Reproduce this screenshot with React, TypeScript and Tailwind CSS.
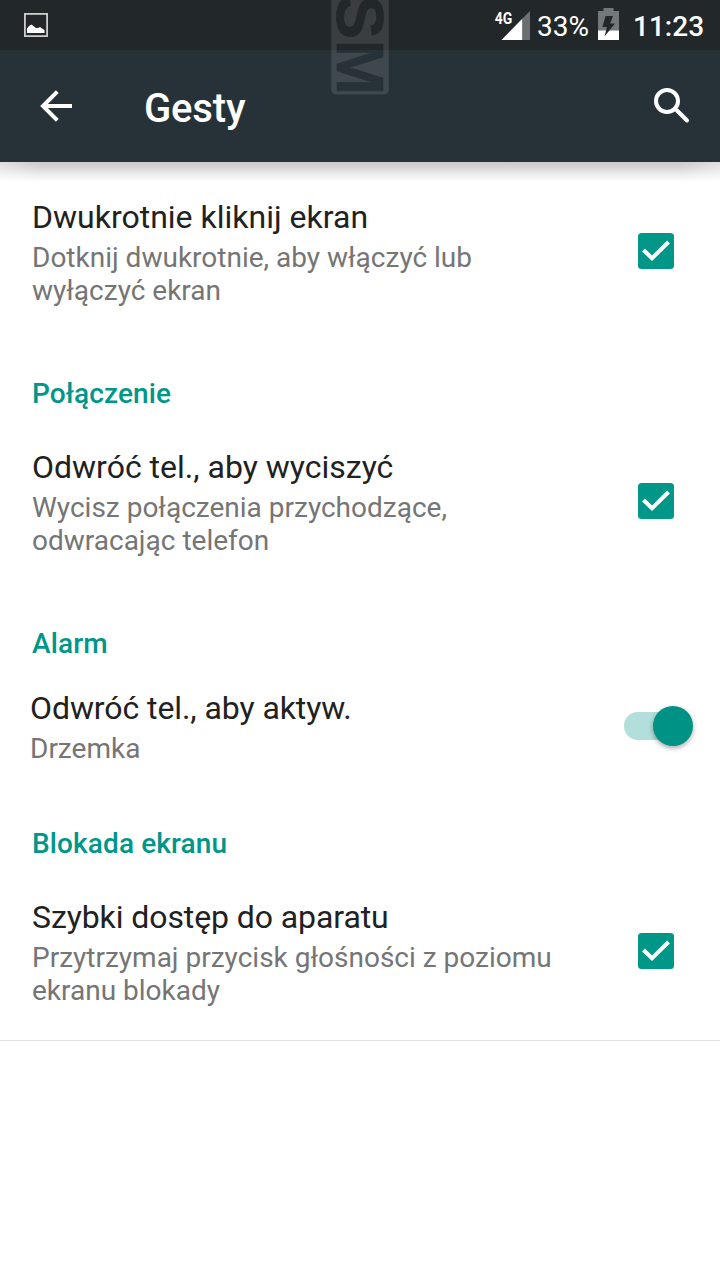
import React from "react";

function Check() {
  return (
    <svg className="mt-[35px] shrink-0" width="36" height="36" viewBox="0 0 36 36">
      <rect width="36" height="36" rx="3.5" fill="#009688" />
      <path d="M5.500 17L14 25.300L30.500 9" fill="none" stroke="#fff" strokeWidth="4" />
    </svg>
  );
}

function Toggle() {
  return (
    <div className="relative mt-[17px] h-10 w-[69px] shrink-0">
      <div className="absolute left-0 top-[6px] h-7 w-14 rounded-full bg-[#b2dfdb]" />
      <div className="absolute right-0 top-0 size-10 rounded-full bg-[#009284] shadow-[0_2px_5px_rgba(0,0,0,0.35)]" />
    </div>
  );
}

function Row({ title, lines, className, children }: { title: string; lines: string[]; className: string; children: React.ReactNode }) {
  return (
    <div className={"flex justify-between " + className}>
      <div className="whitespace-nowrap">
        <div className="text-[32px] leading-[38px] text-[#212121]">{title}</div>
        <div className="mt-[5px] text-[28px] leading-[33px] tracking-normal text-[#757575]">
          {lines.map((line) => (
            <div key={line}>{line}</div>
          ))}
        </div>
      </div>
      {children}
    </div>
  );
}

function Section({ children }: { children: React.ReactNode }) {
  return <h2 className="pl-8 text-[28px] font-medium leading-[33px] tracking-[0.12px] text-[#009688]">{children}</h2>;
}

function StatusBar() {
  return (
    <div className="flex h-[50px] bg-[#22272a] text-white">
      <svg className="ml-6 mt-[13px]" width="24" height="24" viewBox="0 0 24 24">
        <rect x="0.9" y="0.9" width="22.2" height="22.2" fill="none" stroke="#d5d7d5" strokeWidth="1.7" />
        <path d="M3 20V15.500L5 13L7.500 11.500L10 13.500L12 15L14 15L16 14L18 15.500L20.500 17V20Z" fill="#fff" />
      </svg>
      <div className="ml-auto flex">
        <svg width="37" height="50" viewBox="0 0 37 50">
          <text x="0.7" y="23.500" fontFamily="Roboto" fontSize="16" fontWeight="700" fill="#fff" textLength="17.5" lengthAdjust="spacingAndGlyphs">4G</text>
          <path d="M28.500 18.500V40H7.500Z" fill="#fff" />
          <path d="M28.500 18.500L36 11V40H28.500Z" fill="#6b6f71" />
        </svg>
        <div className="ml-[6px] mt-[10px] w-[54px] whitespace-nowrap text-[28px] leading-[33px]">33%</div>
        <svg className="ml-[7px]" width="21" height="50" viewBox="0 0 21 50">
          <path d="M5.500 8H15.500V11H21V31H0V11H5.500Z" fill="#74787a" />
          <path d="M0 30.500H21V40H0Z" fill="#fff" />
          <path d="M7.500 16H15L12.200 23.500H17L6.500 36.500L9 27H4.500Z" fill="#22272a" />
        </svg>
        <div className="ml-[14px] mt-[10px] w-[87px] whitespace-nowrap text-[28px] font-medium leading-[33px]">11:23</div>
      </div>
    </div>
  );
}

export default function App() {
  return (
    <div className="relative flex h-[1280px] w-[720px] flex-col overflow-hidden bg-white font-['Roboto',sans-serif]">
      <header className="h-[162px] bg-[#273238]">
        <StatusBar />
        <div className="flex h-28 text-white">
          <svg className="ml-10 mt-10" width="32" height="32" viewBox="0 0 32 32" fill="none" stroke="#fff" strokeWidth="4">
            <path d="M32 16H3M17.300 1.700L3 16L17.300 30.300" />
          </svg>
          <h1 className="ml-[72px] mt-[35px] text-[40px] font-medium leading-[47px] tracking-[-0.15px]">Gesty</h1>
          <svg className="ml-auto mr-[30px] mt-[37px]" width="37" height="37" viewBox="0 0 37 37" fill="none" stroke="#fff" strokeWidth="4">
            <circle cx="14" cy="14" r="11" />
            <path d="M24 23.500L34 33.500" strokeWidth="4" strokeLinecap="round" />
          </svg>
        </div>
      </header>
      <div className="h-[20px] w-full shrink-0 bg-[linear-gradient(to_bottom,#c9c9c9_0%,#d4d4d4_25%,#ebebeb_60%,#fafafa_90%,#fff_100%)] [mask-image:linear-gradient(to_right,rgba(0,0,0,0.6),#000_40px,#000_680px,rgba(0,0,0,0.6))]" />

      <main>
        <Row className="h-[195px] pl-8 pr-[46px] pt-4" title="Dwukrotnie kliknij ekran" lines={["Dotknij dwukrotnie, aby włączyć lub", "wyłączyć ekran"]}>
          <Check />
        </Row>
        <Section>Połączenie</Section>
        <Row className="mt-[22px] h-[195px] pl-8 pr-[46px] pt-4" title="Odwróć tel., aby wyciszyć" lines={["Wycisz połączenia przychodzące,", "odwracając telefon"]}>
          <Check />
        </Row>
        <Section>Alarm</Section>
        <Row className="mt-[22px] h-[145px] pl-[30px] pr-[27px] pt-[7px] [&>div>div:first-child]:tracking-[-0.08px]" title="Odwróć tel., aby aktyw." lines={["Drzemka"]}>
          <Toggle />
        </Row>
        <Section>Blokada ekranu</Section>
        <Row className="mt-[22px] h-[159px] border-b border-[#e0e0e0] pl-8 pr-[46px] pt-4 [&>div>div:first-child]:tracking-[-0.09px]" title="Szybki dostęp do aparatu" lines={["Przytrzymaj przycisk głośności z poziomu", "ekranu blokady"]}>
          <Check />
        </Row>
      </main>

      <svg className="absolute left-[331px] top-0" width="58" height="95" viewBox="0 0 58 95">
        <defs>
          <linearGradient id="ink" gradientUnits="userSpaceOnUse" x1="0" y1="0" x2="100" y2="0">
            <stop offset="0.5" stopColor="#22272a" />
            <stop offset="0.5" stopColor="#273238" />
          </linearGradient>
        </defs>
        <rect x="0.3" y="-10" width="57.500" height="104.500" rx="5" fill="#fff" fillOpacity="0.11" />
        <g transform="translate(5.500 0) rotate(90)">
          <text x="-5.5 39.600" y="0" fontFamily="Liberation Sans" fontSize="67" fontWeight="700" fill="url(#ink)" stroke="url(#ink)" strokeWidth="0.7" strokeLinejoin="round">SM</text>
        </g>
      </svg>
    </div>
  );
}
